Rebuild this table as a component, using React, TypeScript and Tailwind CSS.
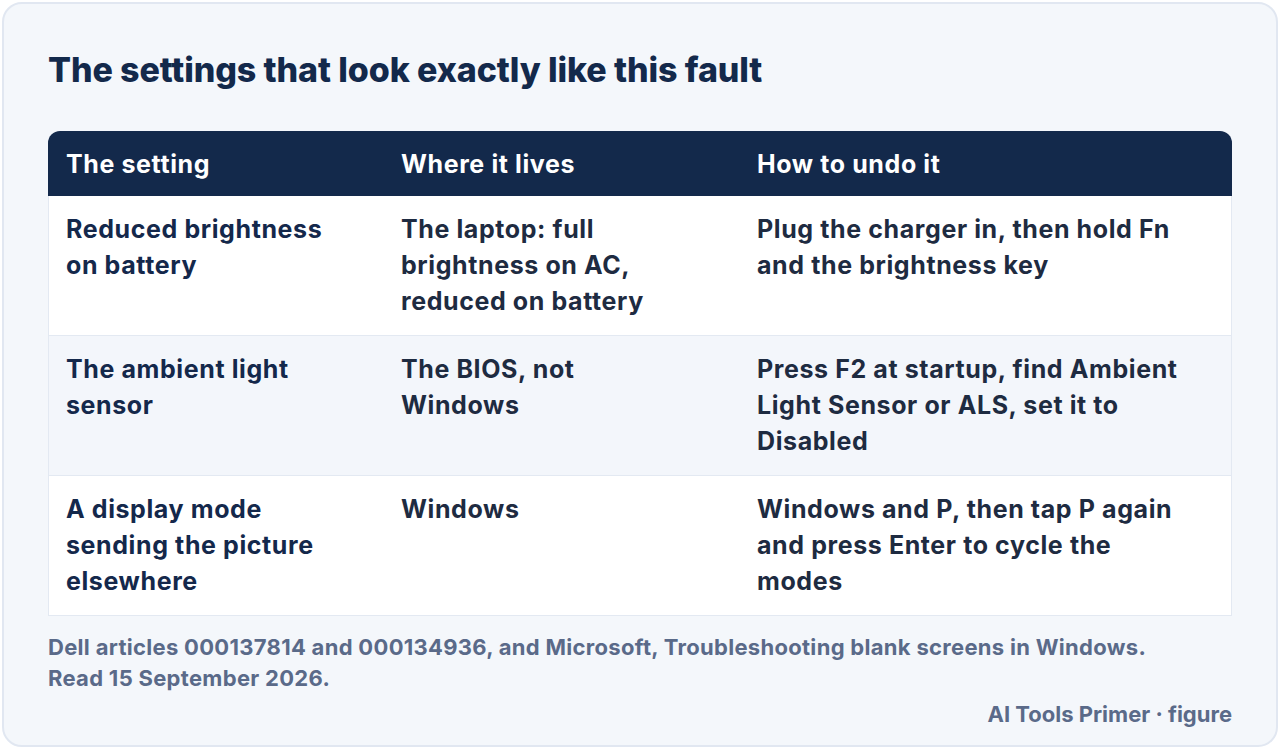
const rows = [
  {
    setting: "Reduced brightness on battery",
    where: "The laptop: full brightness on AC, reduced on battery",
    undo: "Plug the charger in, then hold Fn and the brightness key",
  },
  {
    setting: "The ambient light sensor",
    where: "The BIOS, not Windows",
    undo: "Press F2 at startup, find Ambient Light Sensor or ALS, set it to Disabled",
  },
  {
    setting: "A display mode sending the picture elsewhere",
    where: "Windows",
    undo: "Windows and P, then tap P again and press Enter to cycle the modes",
  },
];

export default function App() {
  return (
    <div className="h-[749px] w-[1280px] bg-white p-[2px] font-['Inter',sans-serif]">
      <div className="flex h-[745px] flex-col rounded-[20px] border-2 border-[#e1e7f1] bg-[#f4f7fb] px-[44px] pt-[44px]">
        <h1 className="text-[34px] leading-[44px] font-extrabold tracking-[-0.1px] text-[#13294b]">
          The settings that look exactly like this fault
        </h1>

        <div className="mt-[39px] text-[25px] leading-[36px] font-bold tracking-[0.6px]">
          <div className="grid grid-cols-[335px_356px_1fr] rounded-t-[12px] bg-[#13294b] text-white">
            <div className="pl-[18px] py-[14.5px]">The setting</div>
            <div className="pl-[18px] py-[14.5px]">Where it lives</div>
            <div className="pl-[18px] py-[14.5px]">How to undo it</div>
          </div>
          <div className="border-x border-b border-[#e3e9f2]">
            {rows.map((r, i) => (
              <div
                key={i}
                className={
                  "grid grid-cols-[334px_356px_1fr] " +
                  (i % 2 === 1 ? "bg-[#f3f6fb] " : "bg-white ") +
                  (i > 0 ? "border-t border-[#e3e9f2]" : "")
                }
              >
                <div className="pl-[17px] pr-[40px] pt-[15px] pb-[16px] text-[#14284b]">{r.setting}</div>
                <div className="pl-[18px] pr-[62px] pt-[15px] pb-[16px] text-[#1e2b41]">{r.where}</div>
                <div className="pl-[18px] pr-[40px] pt-[15px] pb-[16px] text-[#1e2b41]">{r.undo}</div>
              </div>
            ))}
          </div>
        </div>

        <p className="mt-[16px] text-[22px] leading-[31px] font-bold tracking-[0.3px] text-[#5a6a89]">
          Dell articles 000137814 and 000134936, and Microsoft, Troubleshooting blank screens in Windows.
          <br />
          Read 15 September 2026.
        </p>
        <p className="mt-[5px] text-right text-[22px] leading-[31px] font-bold text-[#5a6a89]">
          AI Tools Primer · figure
        </p>
      </div>
    </div>
  );
}
